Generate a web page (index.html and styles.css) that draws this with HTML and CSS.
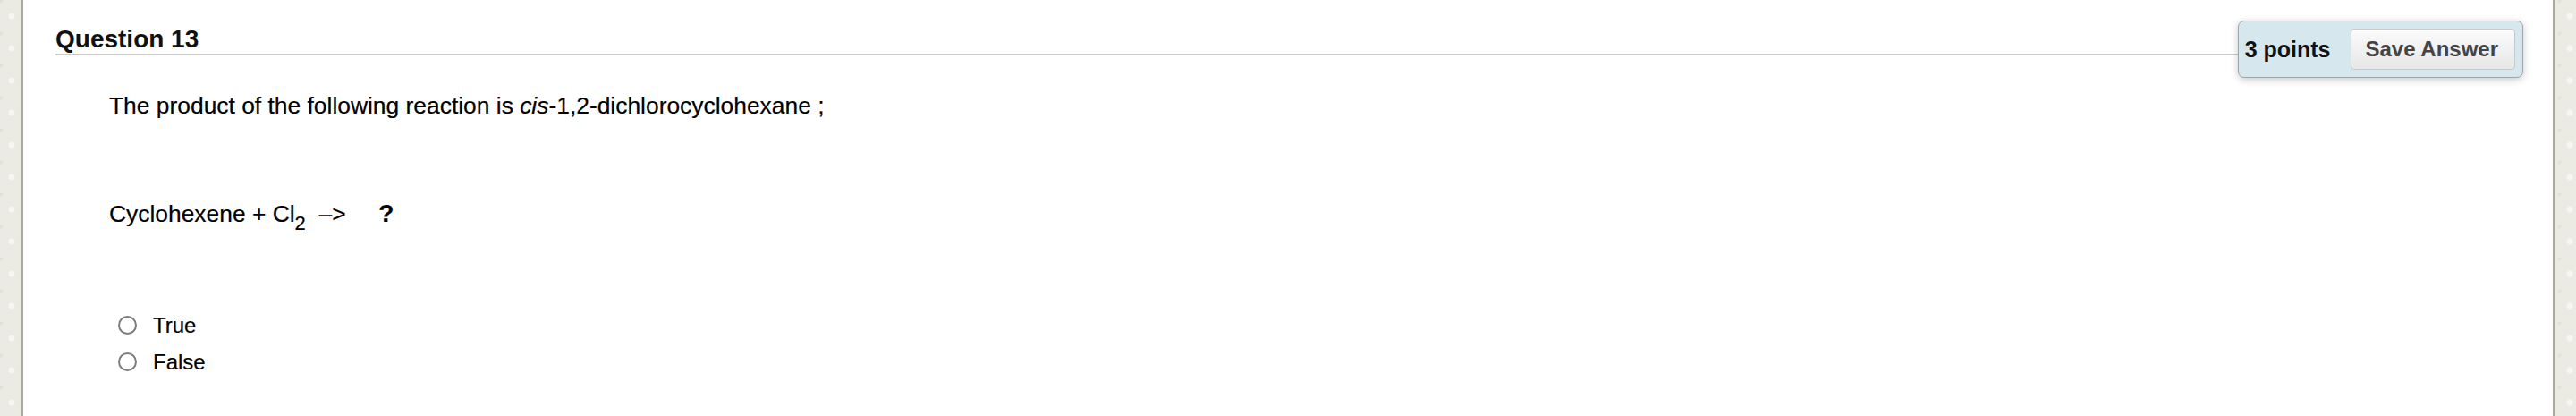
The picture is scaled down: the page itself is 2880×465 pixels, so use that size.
FILE: index.html
```html
<!DOCTYPE html>
<html>
<head>
<meta charset="utf-8">
<link rel="stylesheet" href="styles.css">
</head>
<body>
<div class="page">
  <div class="question">
    <div class="q-header">
      <h2 class="q-title">Question 13</h2>
      <div class="points-box">
        <span class="points">3 points</span>
        <button class="save-btn">Save Answer</button>
      </div>
    </div>
    <div class="q-body">
      <p class="line line-1">The product of the following reaction is <i>cis</i>-1,2-dichlorocyclohexane ;</p>
      <p class="line line-2">Cyclohexene + Cl<sub class="sub">2</sub> &nbsp;–&gt; &nbsp;&nbsp;&nbsp;&nbsp;<b class="qmark">?</b></p>
      <div class="options">
        <label class="option"><input type="radio" name="ans" class="radio"><span>True</span></label>
        <label class="option"><input type="radio" name="ans" class="radio"><span>False</span></label>
      </div>
    </div>
  </div>
</div>
</body>
</html>
```

FILE: styles.css
```css
html, body {
  margin: 0;
  padding: 0;
}
body {
  width: 2880px;
  height: 465px;
  overflow: hidden;
  background-color: #ebeae3;
  background-image:
    radial-gradient(circle at 50% 50%, rgba(255,255,255,0.55) 0 3px, transparent 4px),
    radial-gradient(circle at 0 0, rgba(210,208,198,0.35) 0 3px, transparent 4px);
  background-size: 26px 36px, 26px 36px;
  font-family: "Liberation Sans", Arial, Helvetica, sans-serif;
  color: #000;
}
.page {
  margin: 0 24px;
  height: 465px;
  background: #fff;
  border-left: 2px solid #a9a9a2;
  border-right: 2px solid #a9a9a2;
  box-sizing: border-box;
}
.question {
  padding: 23px 33px 0 36px;
}
.q-header {
  display: flex;
  align-items: flex-start;
}
.q-title {
  flex: 1;
  margin: 5px 0 0 0;
  font-size: 28px;
  line-height: 32px;
  font-weight: bold;
  color: #111;
  border-bottom: 2px solid #cacaca;
}
.points-box {
  display: flex;
  align-items: center;
  height: 64px;
  box-sizing: border-box;
  padding: 0 8px 0 7px;
  background: #d7e7ee;
  border: 1px solid #9ba7ab;
  border-radius: 7px;
  box-shadow: 0 2px 9px rgba(0,0,0,0.22);
}
.points {
  font-size: 25px;
  font-weight: bold;
  color: #111;
  margin-right: 23px;
}
.save-btn {
  height: 46px;
  padding: 0 18px 0 15px;
  font-family: "Liberation Sans", Arial, Helvetica, sans-serif;
  font-size: 24px;
  font-weight: bold;
  color: #444;
  background: linear-gradient(#fbfbfb, #e7e7e7);
  border: 1px solid #c9c9c9;
  border-radius: 4px;
}
.q-body {
  padding-left: 60px;
}
.line {
  margin: 0;
  font-size: 26.4px;
  line-height: 30px;
  color: #000;
  -webkit-text-stroke: 0.2px #000;
}
.line-1 {
  margin-top: 16px;
}
.line-2 {
  margin-top: 91px;
}
.sub {
  font-size: 22px;
  line-height: 0;
  vertical-align: -9px;
}
.qmark {
  font-size: 28px;
  line-height: 0;
}
.options {
  margin-top: 89px;
  padding-left: 10px;
}
.option {
  display: flex;
  align-items: center;
  height: 41px;
  font-size: 24px;
  color: #000;
  -webkit-text-stroke: 0.2px #000;
}
.radio {
  appearance: none;
  -webkit-appearance: none;
  width: 21px;
  height: 21px;
  margin: 0 18px 0 0;
  border: 2px solid #7d7d7d;
  border-radius: 50%;
  background: #fff;
  box-sizing: border-box;
}
```
